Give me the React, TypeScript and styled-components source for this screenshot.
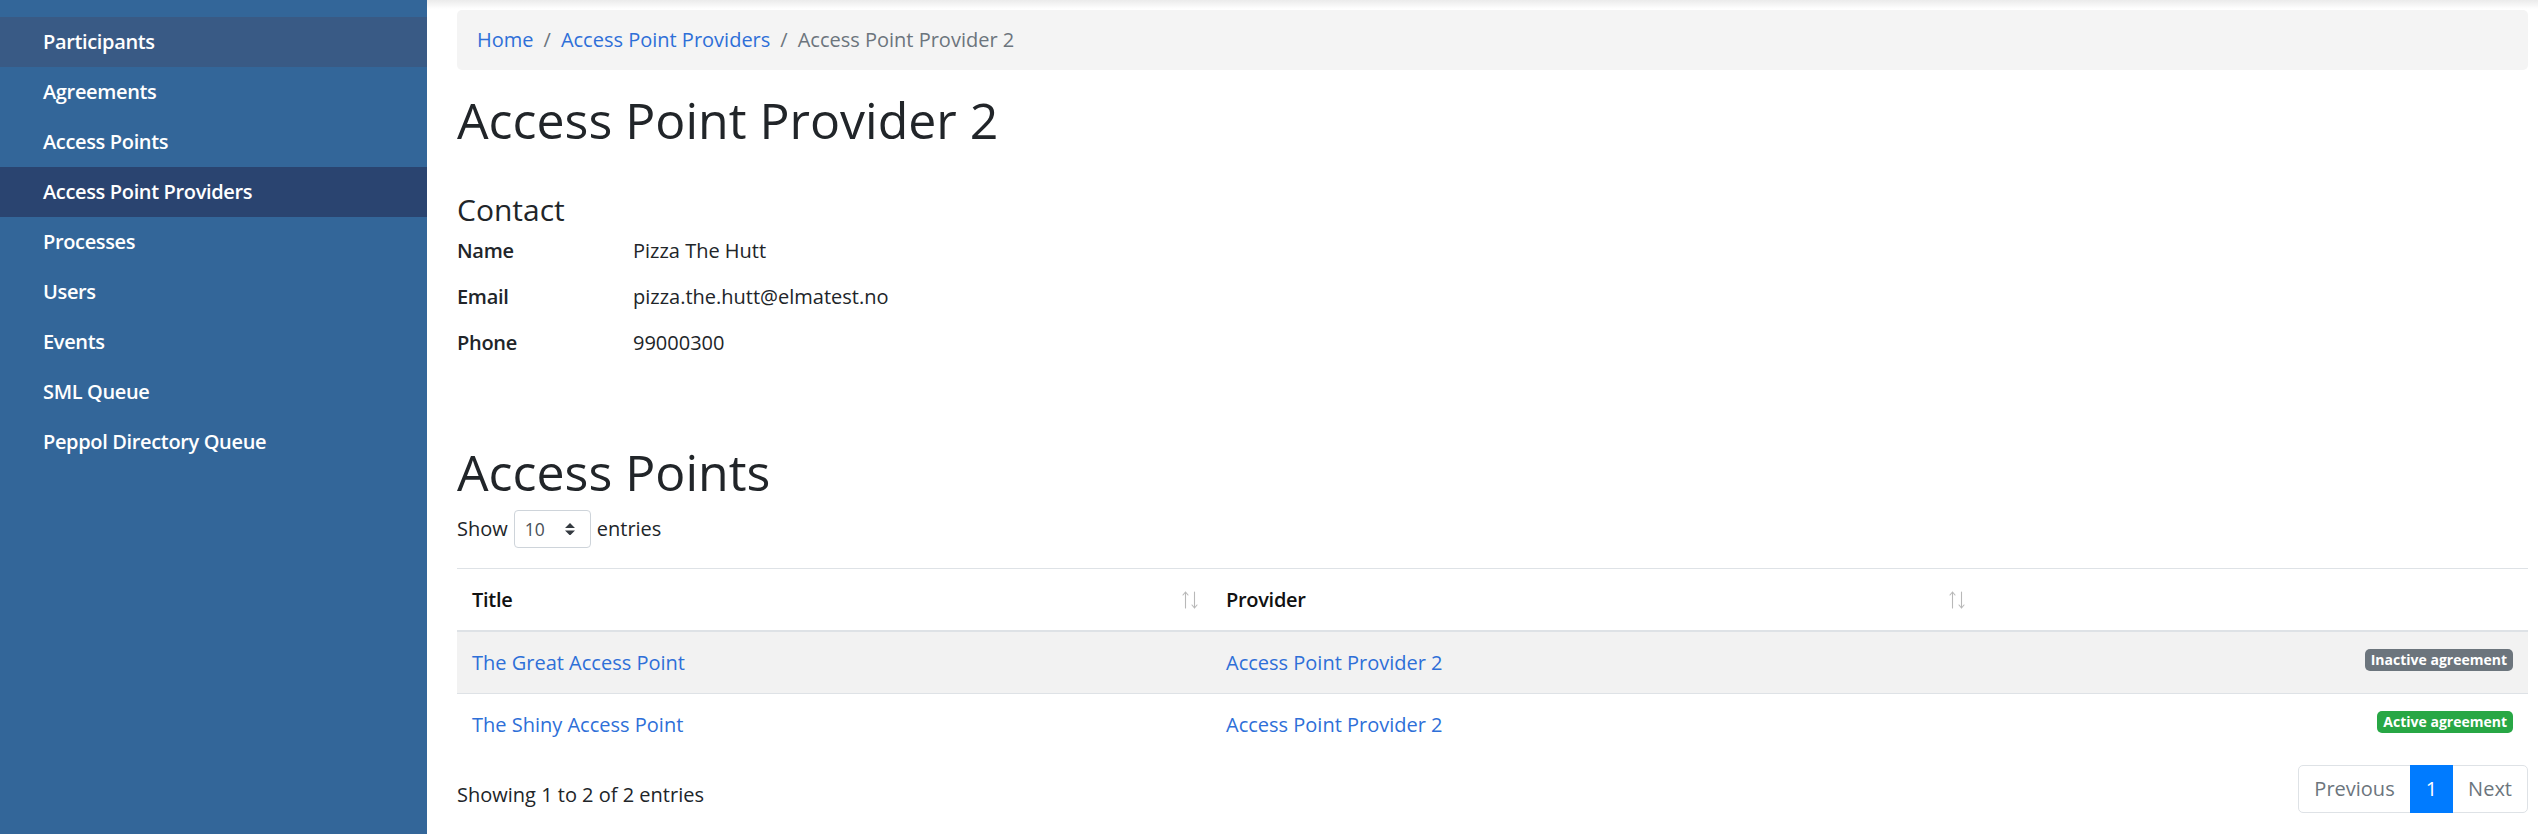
import React from 'react';
import styled, { createGlobalStyle } from 'styled-components';

const GlobalStyle = createGlobalStyle`
  * { box-sizing: border-box; }
  html, body { margin: 0; padding: 0; }
  body {
    font-family: 'Open Sans', 'Liberation Sans', sans-serif;
    font-size: 20px;
    line-height: 30px;
    color: #212529;
    background: #fff;
  }
`;

const Layout = styled.div`
  display: flex;
  width: 2538px;
  min-height: 834px;
`;

const Sidebar = styled.nav`
  width: 427px;
  flex-shrink: 0;
  background: #336699;
  padding-top: 17px;
  min-height: 834px;
`;

const NavItem = styled.a<{ $state?: 'hover' | 'active' }>`
  display: block;
  height: 50px;
  padding: 10px 0 10px 43px;
  color: #fff;
  font-weight: 600;
  font-size: 20px;
  line-height: 30px;
  letter-spacing: -0.35px;
  text-decoration: none;
  background: ${(p) =>
    p.$state === 'active' ? '#2a4470' : p.$state === 'hover' ? '#395a85' : 'transparent'};
`;

const Main = styled.main`
  flex: 1;
  min-width: 0;
  display: flex;
  flex-direction: column;
  padding: 10px 10px 0 30px;
  background: linear-gradient(to bottom, #ebebeb 0, #ffffff 9px) no-repeat;
`;

const Breadcrumb = styled.ol`
  display: flex;
  list-style: none;
  margin: 0 0 20px;
  padding: 15px 20px;
  background: #f4f4f4;
  border-radius: 5px;
`;

const Crumb = styled.li<{ $first?: boolean; $active?: boolean }>`
  color: ${(p) => (p.$active ? '#6c757d' : 'inherit')};
  ${(p) =>
    !p.$first &&
    `
    padding-left: 10px;
    &::before {
      content: '/';
      color: #6c757d;
      padding-right: 10px;
    }
  `}
`;

const Link = styled.a`
  color: #2e6fd8;
  text-decoration: none;
`;

const PageTitle = styled.h1<{ $gap?: number; $mb?: number }>`
  font-size: 50px;
  line-height: 60px;
  font-weight: 400;
  margin: ${(p) => p.$gap ?? 0}px 0 ${(p) => p.$mb ?? 10}px;
`;

const SectionTitle = styled.h4`
  font-size: 30px;
  line-height: 36px;
  font-weight: 400;
  margin: 32px 0 8px;
`;

const DetailList = styled.dl`
  display: grid;
  grid-template-columns: 176px 1fr;
  row-gap: 16px;
  margin: 0;
`;

const Term = styled.dt`
  font-weight: 600;
  letter-spacing: -0.3px;
`;

const Value = styled.dd`
  margin: 0;
`;

const LengthRow = styled.div`
  display: flex;
  align-items: center;
  gap: 6px;
  height: 38px;
  margin-bottom: 12px;
`;

const SelectBox = styled.div`
  width: 77px;
  height: 38px;
  border: 1px solid #ced4da;
  border-radius: 4px;
  display: flex;
  align-items: center;
  justify-content: space-between;
  padding: 0 15px 0 10px;
  font-size: 17.5px;
  color: #495057;
`;

const Table = styled.table`
  width: 100%;
  border-collapse: collapse;
  table-layout: fixed;
  margin: 8px 0 8px;
`;

const HeadCell = styled.th`
  text-align: left;
  font-weight: 600;
  letter-spacing: -0.3px;
  padding: 16px 15px 15px;
  line-height: 30px;
  border-top: 1px solid #dee2e6;
  border-bottom: 2px solid #dee2e6;
  color: #111;
`;

const HeadInner = styled.div`
  display: flex;
  align-items: center;
  justify-content: space-between;
`;

const SortIcon = styled.svg`
  display: block;
  flex-shrink: 0;
  margin-right: -3px;
`;

const BodyRow = styled.tr<{ $striped?: boolean }>`
  background: ${(p) => (p.$striped ? '#f2f2f2' : 'transparent')};
`;

const Cell = styled.td<{ $right?: boolean }>`
  padding: 16px 15px 15px;
  line-height: 30px;
  border-top: 1px solid #dee2e6;
  text-align: ${(p) => (p.$right ? 'right' : 'left')};
  vertical-align: top;
`;

const Badge = styled.span<{ $tone: 'secondary' | 'success' }>`
  display: inline-block;
  padding: 4px 6px;
  font-size: 14px;
  font-weight: 700;
  line-height: 1;
  color: #fff;
  border-radius: 5px;
  vertical-align: 5px;
  background: ${(p) => (p.$tone === 'success' ? '#28a745' : '#6c757d')};
`;

const Footer = styled.div`
  display: flex;
  justify-content: space-between;
  align-items: flex-start;
`;

const Info = styled.div`
  padding-top: 17px;
`;

const Pagination = styled.ul`
  display: flex;
  list-style: none;
  margin: 2px 0 0;
  padding: 0;
`;

const PageLink = styled.li<{ $active?: boolean; $pos?: 'first' | 'last' }>`
  padding: 10px 15px;
  line-height: 26px;
  margin-left: ${(p) => (p.$pos === 'first' ? '0' : '-1px')};
  border: 1px solid ${(p) => (p.$active ? '#007bff' : '#dee2e6')};
  background: ${(p) => (p.$active ? '#007bff' : '#fff')};
  color: ${(p) => (p.$active ? '#fff' : '#6c757d')};
  position: relative;
  z-index: ${(p) => (p.$active ? 1 : 0)};
  border-radius: ${(p) =>
    p.$pos === 'first' ? '5px 0 0 5px' : p.$pos === 'last' ? '0 5px 5px 0' : '0'};
`;

const navItems: { label: string; state?: 'hover' | 'active' }[] = [
  { label: 'Participants', state: 'hover' },
  { label: 'Agreements' },
  { label: 'Access Points' },
  { label: 'Access Point Providers', state: 'active' },
  { label: 'Processes' },
  { label: 'Users' },
  { label: 'Events' },
  { label: 'SML Queue' },
  { label: 'Peppol Directory Queue' },
];

const rows = [
  { title: 'The Great Access Point', provider: 'Access Point Provider 2', active: false },
  { title: 'The Shiny Access Point', provider: 'Access Point Provider 2', active: true },
];

const SelectArrows = () => (
  <svg width="10" height="12.5" viewBox="0 0 4 5" aria-hidden="true">
    <path d="M2 0L0 2h4zm0 5L0 3h4z" fill="#343a40" />
  </svg>
);

const Sort = () => (
  <SortIcon width="18" height="20" viewBox="0 0 18 20" aria-hidden="true">
    <g fill="none" stroke="#000" strokeOpacity="0.28" strokeWidth="1.1" strokeLinecap="round">
      <path d="M4.5 2v16M2 5l2.5-3L7 5" />
      <path d="M13.5 2v16M11 15l2.5 3L16 15" />
    </g>
  </SortIcon>
);

export default function App() {
  return (
    <>
      <GlobalStyle />
      <Layout>
        <Sidebar>
          {navItems.map((n) => (
            <NavItem key={n.label} href="#" $state={n.state}>
              {n.label}
            </NavItem>
          ))}
        </Sidebar>
        <Main>
          <Breadcrumb>
            <Crumb $first>
              <Link href="#">Home</Link>
            </Crumb>
            <Crumb>
              <Link href="#">Access Point Providers</Link>
            </Crumb>
            <Crumb $active>Access Point Provider 2</Crumb>
          </Breadcrumb>

          <PageTitle>Access Point Provider 2</PageTitle>

          <SectionTitle>Contact</SectionTitle>
          <DetailList>
            <Term>Name</Term>
            <Value>Pizza The Hutt</Value>
            <Term>Email</Term>
            <Value>pizza.the.hutt@elmatest.no</Value>
            <Term>Phone</Term>
            <Value>99000300</Value>
          </DetailList>

          <PageTitle $gap={84} $mb={8}>
            Access Points
          </PageTitle>

          <LengthRow>
            <span>Show</span>
            <SelectBox>
              <span>10</span>
              <SelectArrows />
            </SelectBox>
            <span>entries</span>
          </LengthRow>

          <Table>
            <colgroup>
              <col style={{ width: '754px' }} />
              <col style={{ width: '767px' }} />
              <col />
            </colgroup>
            <thead>
              <tr>
                <HeadCell>
                  <HeadInner>
                    <span>Title</span>
                    <Sort />
                  </HeadInner>
                </HeadCell>
                <HeadCell>
                  <HeadInner>
                    <span>Provider</span>
                    <Sort />
                  </HeadInner>
                </HeadCell>
                <HeadCell />
              </tr>
            </thead>
            <tbody>
              {rows.map((r, i) => (
                <BodyRow key={r.title} $striped={i % 2 === 0}>
                  <Cell>
                    <Link href="#">{r.title}</Link>
                  </Cell>
                  <Cell>
                    <Link href="#">{r.provider}</Link>
                  </Cell>
                  <Cell $right>
                    <Badge $tone={r.active ? 'success' : 'secondary'}>
                      {r.active ? 'Active agreement' : 'Inactive agreement'}
                    </Badge>
                  </Cell>
                </BodyRow>
              ))}
            </tbody>
          </Table>

          <Footer>
            <Info>Showing 1 to 2 of 2 entries</Info>
            <Pagination>
              <PageLink $pos="first">Previous</PageLink>
              <PageLink $active>1</PageLink>
              <PageLink $pos="last">Next</PageLink>
            </Pagination>
          </Footer>
        </Main>
      </Layout>
    </>
  );
}
